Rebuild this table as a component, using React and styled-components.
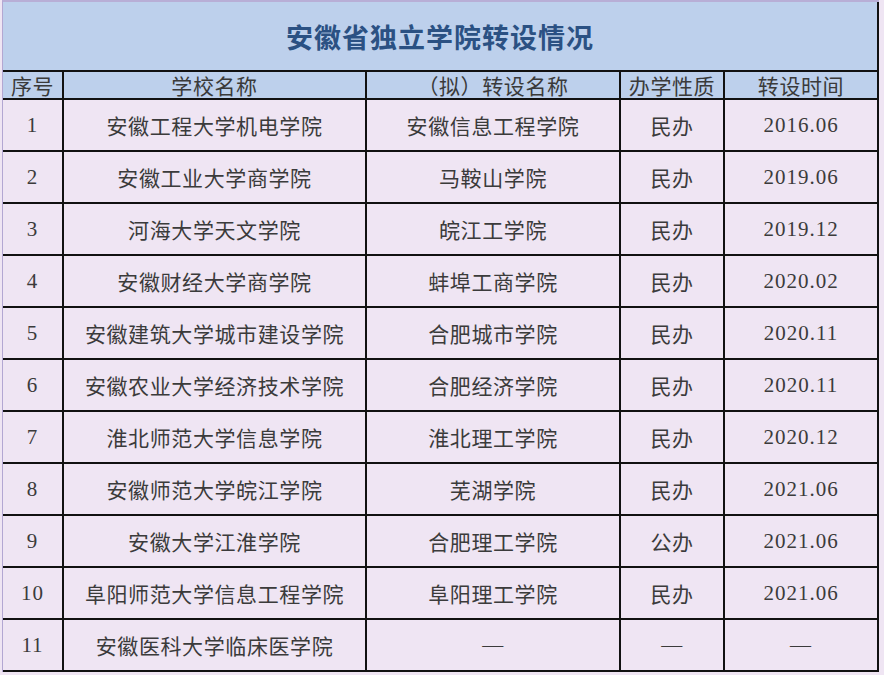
import styled, { createGlobalStyle } from 'styled-components';

const GlobalStyle = createGlobalStyle`
  html, body {
    margin: 0;
    padding: 0;
    background: #efe5f3;
  }
  body {
    font-family: "Liberation Serif", "Noto Sans CJK SC", serif;
    color: #333;
  }
`;

const Sheet = styled.div`
  margin-left: 2px;
  width: 876px;
  border-top: 2px solid #b8aed6;
  border-left: 1px solid #b3a7d2;
`;

const Title = styled.h1`
  margin: 0;
  height: 68px;
  display: flex;
  align-items: center;
  justify-content: center;
  background: #bdd0ec;
  border-right: 2px solid #111;
  font-family: "Noto Sans CJK SC", sans-serif;
  font-weight: 700;
  font-size: 27px;
  letter-spacing: 1px;
  color: #2b5183;
`;

const Grid = styled.div`
  display: grid;
  grid-template-columns: 61px 303px 254px 104px 154px;
  border-top: 2px solid #111;
`;

const Cell = styled.div`
  display: flex;
  align-items: center;
  justify-content: center;
  height: ${(p) => (p.$head ? '26px' : '50px')};
  background: ${(p) => (p.$head ? '#bdd0ec' : '#efe5f3')};
  border-right: 2px solid #111;
  border-bottom: 2px solid #111;
  font-size: 21px;
  letter-spacing: ${(p) => (p.$num ? '1px' : '0.6px')};
  color: ${(p) => (p.$head ? '#3a3a3a' : '#3b3b3b')};
  white-space: nowrap;
`;

const headers = ['序号', '学校名称', '（拟）转设名称', '办学性质', '转设时间'];

const rows = [
  ['1', '安徽工程大学机电学院', '安徽信息工程学院', '民办', '2016.06'],
  ['2', '安徽工业大学商学院', '马鞍山学院', '民办', '2019.06'],
  ['3', '河海大学天文学院', '皖江工学院', '民办', '2019.12'],
  ['4', '安徽财经大学商学院', '蚌埠工商学院', '民办', '2020.02'],
  ['5', '安徽建筑大学城市建设学院', '合肥城市学院', '民办', '2020.11'],
  ['6', '安徽农业大学经济技术学院', '合肥经济学院', '民办', '2020.11'],
  ['7', '淮北师范大学信息学院', '淮北理工学院', '民办', '2020.12'],
  ['8', '安徽师范大学皖江学院', '芜湖学院', '民办', '2021.06'],
  ['9', '安徽大学江淮学院', '合肥理工学院', '公办', '2021.06'],
  ['10', '阜阳师范大学信息工程学院', '阜阳理工学院', '民办', '2021.06'],
  ['11', '安徽医科大学临床医学院', '—', '—', '—'],
];

export default function App() {
  return (
    <>
      <GlobalStyle />
      <Sheet>
        <Title>安徽省独立学院转设情况</Title>
        <Grid>
          {headers.map((h) => (
            <Cell key={h} $head>
              {h}
            </Cell>
          ))}
          {rows.map((r) =>
            r.map((v, i) => (
              <Cell key={r[0] + '-' + i} $num={i === 0 || i === 4}>
                {v}
              </Cell>
            ))
          )}
        </Grid>
      </Sheet>
    </>
  );
}
